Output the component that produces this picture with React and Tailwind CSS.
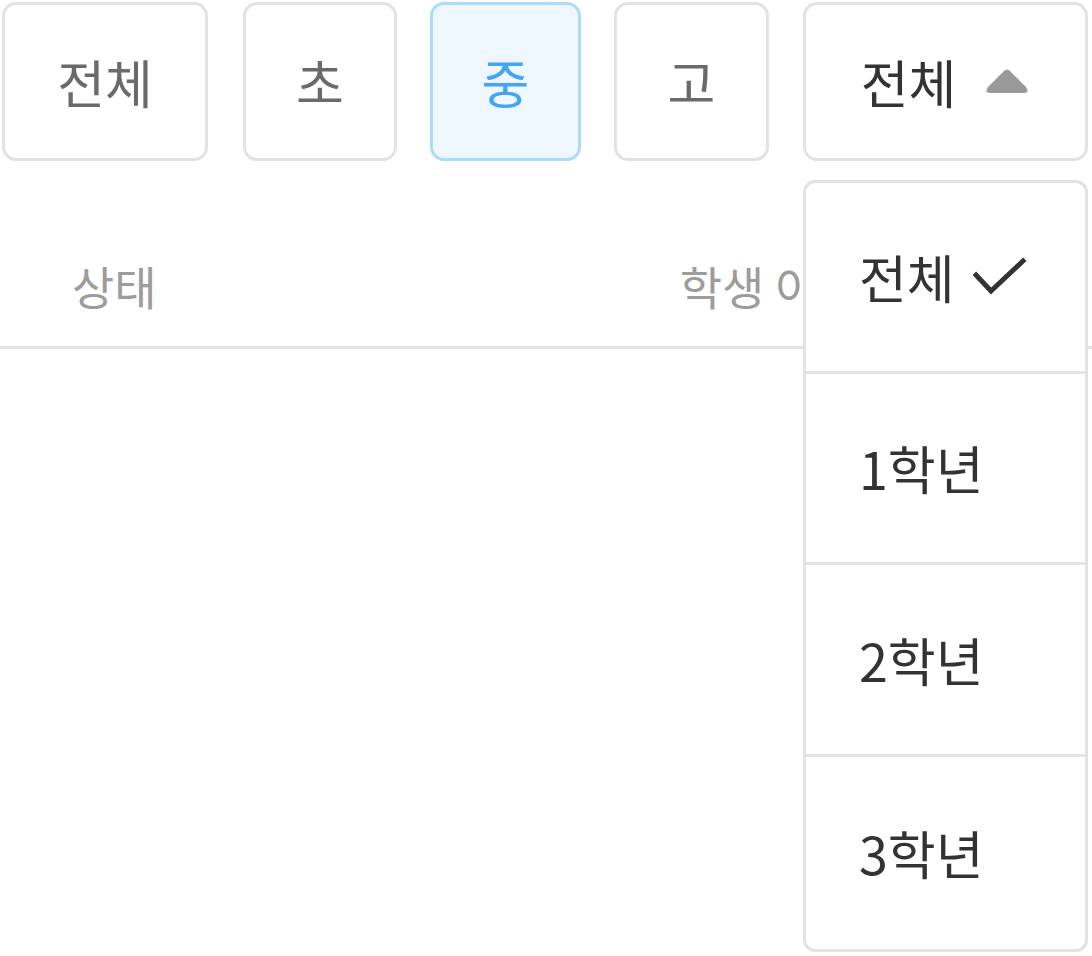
import React from "react";

const font = { fontFamily: '"Noto Sans CJK KR", "Noto Sans", sans-serif' };

function Btn({ w, children, active, className = "" }) {
  return (
    <div
      className={
        "flex h-[159px] shrink-0 items-center justify-center rounded-[14px] border-[3px] text-[52px] " +
        (active
          ? "border-[#aadbfa] bg-[#eef7ff] text-[#44a6f3] "
          : "border-[#e2e2e2] bg-white text-[#6a6a6a] ") +
        className
      }
      style={{ width: w }}
    >
      <span className="leading-none">{children}</span>
    </div>
  );
}

function Check() {
  return (
    <svg width="54" height="44" viewBox="0 0 54 44" className="ml-[18px]">
      <polyline points="3,20 18,36 50,6" fill="none" stroke="#333" strokeWidth="5" strokeLinecap="square" />
    </svg>
  );
}

function Caret() {
  return (
    <svg width="46" height="28" viewBox="0 0 46 28" className="ml-[28px]">
      <path d="M20 3 Q23 0 26 3 L42 19 Q46 25 40 25 L6 25 Q0 25 4 19 Z" fill="#999" />
    </svg>
  );
}

export default function App() {
  const items = ["1학년", "2학년", "3학년"];
  return (
    <div className="relative min-h-[956px] w-[1092px] overflow-hidden bg-white" style={font}>
      <div className="flex pl-[2px] pt-[2px]">
        <Btn w={206}>전체</Btn>
        <Btn w={154} className="ml-[35px]">초</Btn>
        <Btn w={151} active className="ml-[33px]">중</Btn>
        <Btn w={155} className="ml-[33px]">고</Btn>
        <div className="ml-[34px] flex h-[159px] w-[285px] shrink-0 items-center justify-center rounded-[14px] border-[3px] border-[#e2e2e2] bg-white text-[52px] text-[#333]">
          <span className="leading-none">전체</span>
          <Caret />
        </div>
      </div>
      <div className="flex h-[188px] items-center border-b-[3px] border-[#e2e2e2] pt-[62px] text-[46px] text-[#9c9c9c]">
        <span className="ml-[72px] leading-none">상태</span>
        <span className="ml-[523px] leading-none">학생 이름</span>
      </div>
      <div className="absolute left-[803px] top-[180px] w-[285px] overflow-hidden rounded-[12px] border-[3px] border-[#e2e2e2] bg-white text-[52px] text-[#333]">
        <div className="flex h-[188px] items-center pl-[53px]">
          <span className="leading-none">전체</span>
          <Check />
        </div>
        <div className="flex h-[191px] items-center border-t-[3px] border-[#e2e2e2] pl-[53px]">
          <span className="leading-none">{items[0]}</span>
        </div>
        <div className="flex h-[192px] items-center border-t-[3px] border-[#e2e2e2] pl-[53px]">
          <span className="leading-none">{items[1]}</span>
        </div>
        <div className="flex h-[195px] items-center border-t-[3px] border-[#e2e2e2] pl-[53px]">
          <span className="leading-none">{items[2]}</span>
        </div>
      </div>
    </div>
  );
}
